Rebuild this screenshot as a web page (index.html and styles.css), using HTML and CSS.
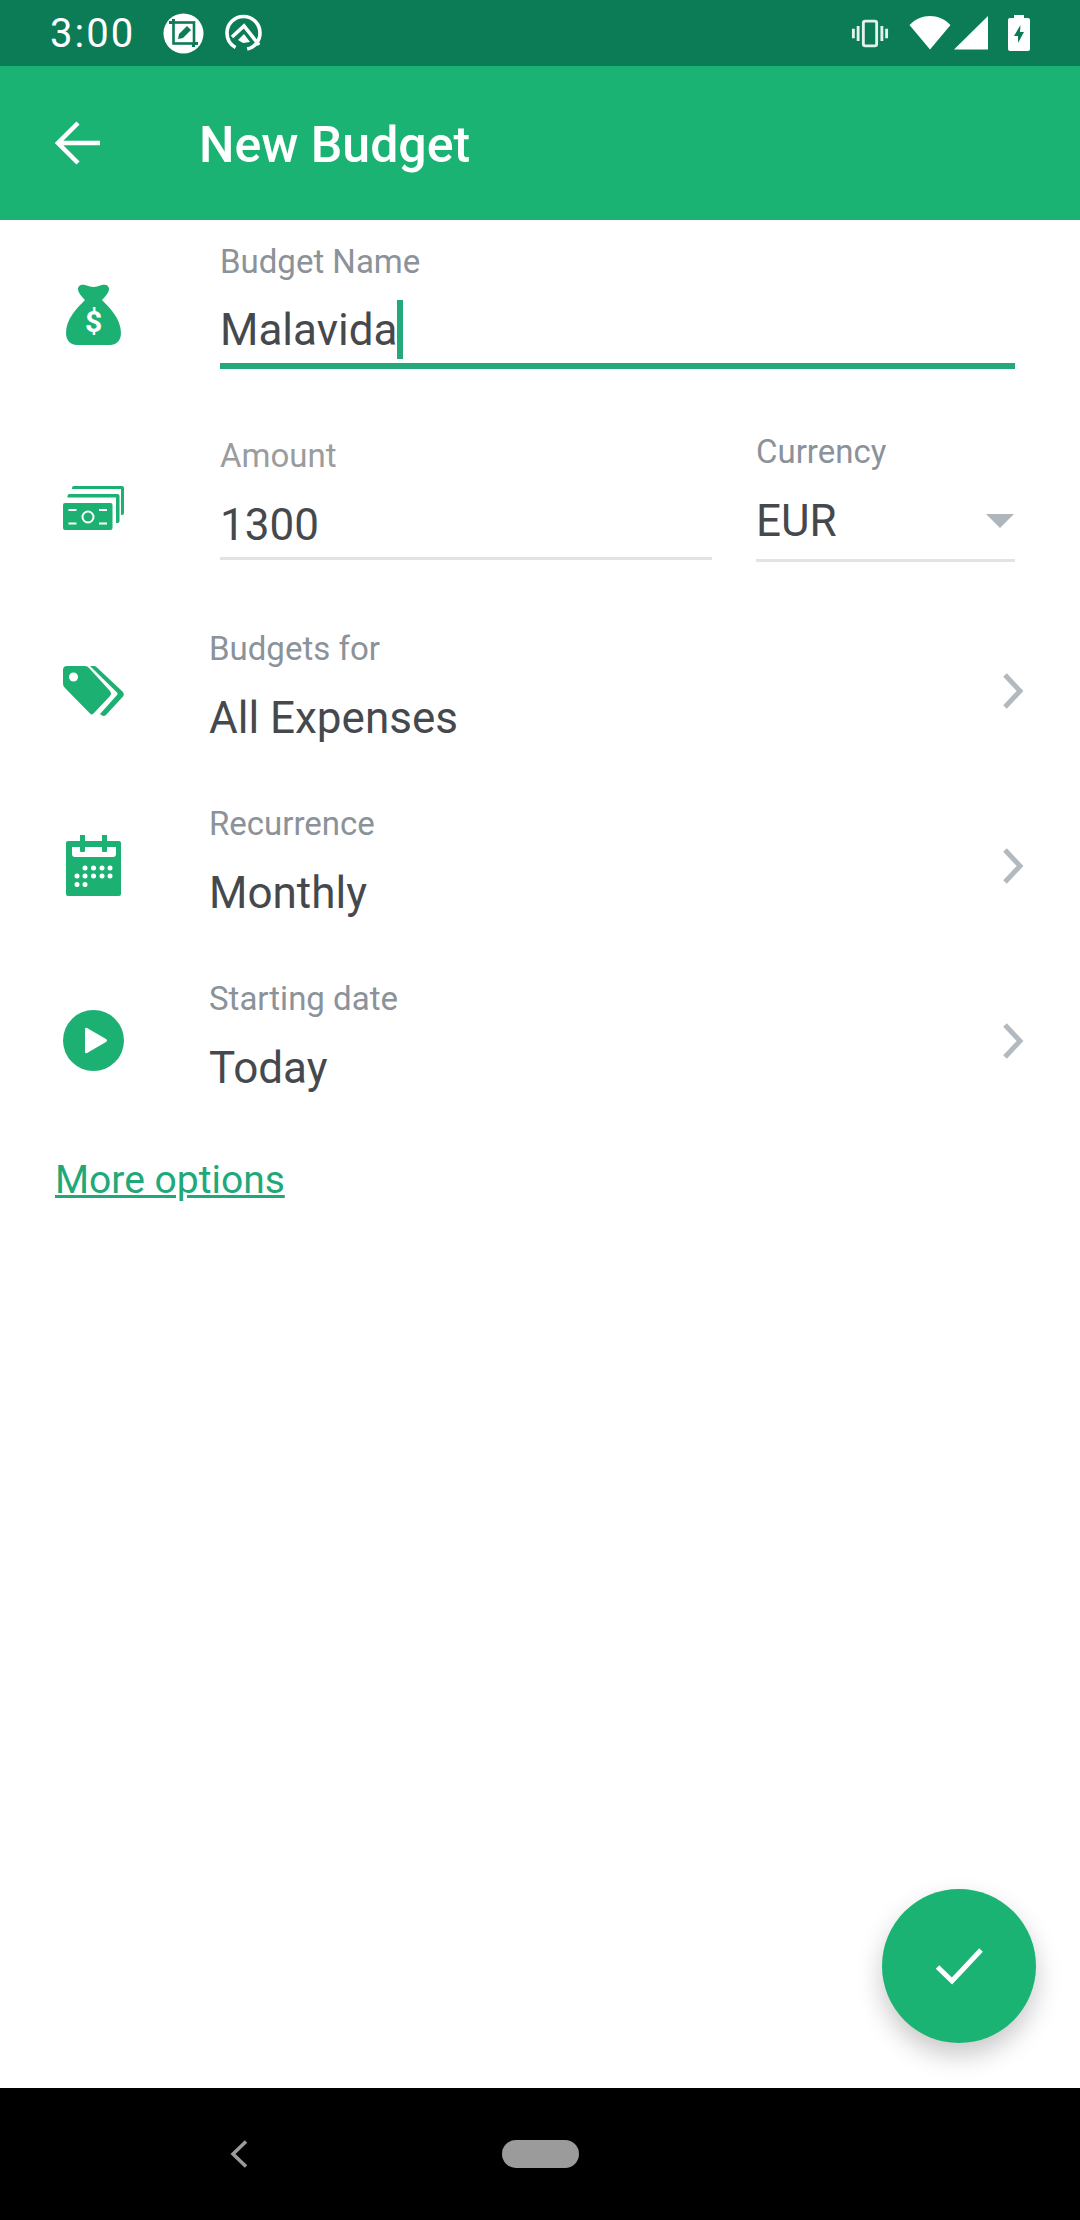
FILE: index.html
```html
<!DOCTYPE html>
<html lang="en">
<head>
<meta charset="utf-8">
<title>New Budget</title>
<link rel="stylesheet" href="styles.css">
</head>
<body>
<div class="screen">
  <header class="status">
    <span class="time">3:00</span>
    <svg class="st-crop" width="41" height="41" viewBox="0 0 41 41"><circle cx="20.500" cy="20.500" r="20" fill="#fff"/><rect x="10.500" y="9.500" width="20.500" height="21" fill="none" stroke="#0b7c56" stroke-width="2.600"/><path d="M9 6h3v4H9zM29 30h3v4h-3zM31 29h4v3h-4zM6 8h4v3H6z" fill="#0b7c56"/><path d="M15 26l1-5 8-8 4 4-8 8z" fill="#0b7c56"/></svg>
    <svg class="st-q" width="38" height="39" viewBox="0 0 38 39"><circle cx="18.500" cy="19" r="16.500" fill="none" stroke="#fff" stroke-width="3.600" stroke-dasharray="92 12" stroke-dashoffset="-34"/><path d="M7 23L19 12l15 19" fill="none" stroke="#fff" stroke-width="3.600"/><path d="M13 26l6-6 6 8-7 1z" fill="#fff"/></svg>
    <span class="status-gap"></span>
    <svg class="st-vib" width="38" height="29" viewBox="0 0 40 30"><path d="M1 10h3v10H1zM6 7h3v16H6zM31 7h3v16h-3zM36 10h3v10h-3z" fill="#e4f2ec"/><rect x="13" y="2" width="14" height="26" rx="2" fill="none" stroke="#e4f2ec" stroke-width="3"/></svg>
    <svg class="st-wifi" width="42" height="34" viewBox="0 0 42 34"><path d="M0.500 9C12-3 30-3 41.500 9L21 33.500z" fill="#fff"/></svg>
    <svg class="st-sig" width="34" height="34" viewBox="0 0 34 34"><path d="M0 33.500L34 0v33.500z" fill="#fff"/></svg>
    <svg class="st-bat" width="22" height="36" viewBox="0 0 22 36"><path d="M6 0h10v3h4q2 0 2 2v29q0 2-2 2H2q-2 0-2-2V5q0-2 2-2h4z" fill="#fff"/><path d="M12.500 10L6 21h4v7l6-11h-4z" fill="#0b7c56"/></svg>
  </header>

  <div class="appbar">
    <svg class="back" width="46" height="44" viewBox="0 0 46 44"><path d="M45 22H4M23 2L3 22l20 20" fill="none" stroke="#fff" stroke-width="4.500"/></svg>
    <h1 class="title">New Budget</h1>
  </div>

  <main class="content">
    <section class="row row-name">
      <svg class="ico ico-bag" width="55" height="61" viewBox="0 0 55 61"><path d="M12 5C12 1 16 0 19 1C23 2 25 3 27.500 3C30 3 32 2 36 1C39 0 43 1 43 5C43 8 40 12 36 16C44 24 55 35 55 49C55 57 50 61 44 61L11 61C5 61 0 57 0 49C0 35 11 24 19 16C15 12 12 8 12 5Z" fill="#1db073"/><text x="27.500" y="48" class="dollar">$</text></svg>
      <div class="field field-full">
        <div class="label">Budget Name</div>
        <div class="value value-name"><span class="caret-anchor">Malavida<span class="caret"></span></span></div>
      </div>
    </section>

    <section class="row row-amount">
      <svg class="ico ico-cash" width="61" height="44" viewBox="0 0 61 44"><path d="M11 0h48q2 0 2 2v25q0 2-2 2h-1V3H9V2q0-2 2-2z" fill="#1db073"/><path d="M6.500 8h48q2 0 2 2v25q0 2-2 2H53V11.500H4.500V10q0-2 2-2z" fill="#1db073"/><rect x="0" y="17" width="49.500" height="27" rx="2" fill="#1db073"/><circle cx="25" cy="31" r="5.500" fill="none" stroke="#fff" stroke-width="2"/><path d="M5.500 24h8M5.500 37.500h8M36 24h8M36 37.500h8" stroke="#fff" stroke-width="2"/></svg>
      <div class="field field-amount">
        <div class="label label-soft">Amount</div>
        <div class="value">1300</div>
      </div>
      <div class="field field-currency">
        <div class="label">Currency</div>
        <div class="value value-select">EUR<span class="tri"></span></div>
      </div>
    </section>

    <section class="row row-link">
      <svg class="ico ico-tag" width="61" height="50" viewBox="0 0 61 50"><path d="M4 0H22q2.500 0 4 2L47 25q2 3 0 5L31 47q-2 2.500-4 .500L2 22Q0 20 0 18V4Q0 0 4 0Z" fill="#1db073"/><circle cx="10.500" cy="11" r="4.500" fill="#fff"/><path d="M27 0h4q2 0 3.500 2L60 26q1.500 2.500 0 4.500L43 49q-2 1.500-4 .500l-2-1.500L54 29q1-1.500 0-2.500z" fill="#1db073"/></svg>
      <div class="link-text">
        <div class="label">Budgets for</div>
        <div class="link-value">All Expenses</div>
      </div>
      <svg class="chev" width="22" height="36" viewBox="0 0 22 36"><path d="M3 2l15 16L3 34" fill="none" stroke="#b3babf" stroke-width="5"/></svg>
    </section>

    <section class="row row-link">
      <svg class="ico ico-cal" width="55" height="61" viewBox="0 0 55 61"><path d="M14 0h5v6h17V0h5v6h12q2 0 2 2v51q0 2-2 2H2q-2 0-2-2V8q0-2 2-2h12z" fill="#1db073"/><path d="M6 12h8v4q0 1 1 1h3q1 0 1-1v-4h17v4q0 1 1 1h3q1 0 1-1v-4h9v7q0 3-3 3H9q-3 0-3-3z" fill="#fff"/><g fill="#fff"><circle cx="19" cy="33" r="2.500"/><circle cx="27.500" cy="33" r="2.500"/><circle cx="36" cy="33" r="2.500"/><circle cx="44" cy="33" r="2.500"/><circle cx="11" cy="41" r="2.500"/><circle cx="19" cy="41" r="2.500"/><circle cx="27.500" cy="41" r="2.500"/><circle cx="36" cy="41" r="2.500"/><circle cx="44" cy="41" r="2.500"/><circle cx="11" cy="49.500" r="2.500"/><circle cx="19" cy="49.500" r="2.500"/></g></svg>
      <div class="link-text">
        <div class="label">Recurrence</div>
        <div class="link-value">Monthly</div>
      </div>
      <svg class="chev" width="22" height="36" viewBox="0 0 22 36"><path d="M3 2l15 16L3 34" fill="none" stroke="#b3babf" stroke-width="5"/></svg>
    </section>

    <section class="row row-link">
      <svg class="ico ico-play" width="61" height="61" viewBox="0 0 61 61"><circle cx="30.500" cy="30.500" r="30.500" fill="#1db073"/><path d="M22 19q0-2 2-1l19 11q2 1.500 0 3L24 43q-2 1-2-1z" fill="#fff"/></svg>
      <div class="link-text">
        <div class="label">Starting date</div>
        <div class="link-value">Today</div>
      </div>
      <svg class="chev" width="22" height="36" viewBox="0 0 22 36"><path d="M3 2l15 16L3 34" fill="none" stroke="#b3babf" stroke-width="5"/></svg>
    </section>

    <a class="more">More options</a>

    <button class="fab" type="button" aria-label="Save">
      <svg width="48" height="38" viewBox="0 0 48 38"><path d="M2.500 20l14.500 14L46 3" fill="none" stroke="#fff" stroke-width="5"/></svg>
    </button>
  </main>

  <footer class="nav">
    <svg class="nav-back" width="18" height="28" viewBox="0 0 18 28"><path d="M16 1.500L3 14l13 12.500" fill="none" stroke="#9b9b9b" stroke-width="3.500"/></svg>
    <span class="nav-pill"></span>
  </footer>
</div>
</body>
</html>
```
FILE: styles.css
```css
* { box-sizing: border-box; }
html, body { margin: 0; padding: 0; background: #fff; }
body { font-family: Roboto, "Liberation Sans", sans-serif; }
.screen { width: 1080px; height: 2220px; display: flex; flex-direction: column; overflow: hidden; }

.status { height: 66px; flex: none; background: #0b7c56; display: flex; align-items: center; padding-left: 50px; padding-right: 50px; color: #fff; }
.time { font-size: 40px; line-height: 66px; width: 84px; letter-spacing: 2px; padding-top: 2px; }
.st-crop { margin-left: 29px; }
.st-q { margin-left: 21px; }
.status-gap { flex: 1; }
.st-wifi { margin-left: 20px; }
.st-sig { margin-left: 3px; }
.st-bat { margin-left: 20px; }

.appbar { height: 154px; flex: none; background: #1bb374; display: flex; align-items: center; padding-left: 55px; }
.back { flex: none; }
.title { margin: 4px 0 0 98px; color: #fff; font-size: 50px; font-weight: 500; line-height: 60px; }

.content { flex: 1; position: relative; display: flex; flex-direction: column; }
.row { display: flex; position: relative; }
.ico { flex: none; }
.label { font-size: 33px; line-height: 38px; color: #8b9299; }
.label-soft { color: #9a9c9e; }
.value { font-size: 44px; line-height: 50px; color: #45494d; }
.dollar { font-family: Roboto, sans-serif; font-weight: 700; font-size: 30px; fill: #fff; text-anchor: middle; }

.row-name { height: 149px; padding-left: 66px; }
.ico-bag { margin-top: 64px; }
.field-full { margin-left: 99px; width: 795px; height: 149px; padding-top: 23px; border-bottom: 6px solid #26a97a; }
.value-name { margin-top: 24px; }
.caret-anchor { position: relative; display: inline-block; }
.caret { position: absolute; right: -6px; top: -5px; width: 6px; height: 59px; background: #26a97a; }

.row-amount { height: 193px; padding-left: 63px; margin-bottom: 41px; }
.ico-cash { margin-top: 117px; }
.field-amount { margin-left: 96px; width: 492px; height: 191px; padding-top: 68px; border-bottom: 3px solid #e1e3e6; }
.field-amount .value { margin-top: 25px; }
.field-currency { margin-left: 44px; width: 259px; height: 193px; padding-top: 64px; border-bottom: 3px solid #e1e3e6; }
.field-currency .value { margin-top: 25px; }
.value-select { display: flex; justify-content: space-between; align-items: center; }
.tri { width: 0; height: 0; margin-right: 1px; border-left: 14px solid transparent; border-right: 14px solid transparent; border-top: 14px solid #aeb5bb; }

.row-link { height: 175px; padding-left: 63px; align-items: center; padding-right: 56px; }
.link-text { flex: 1; margin-left: 85px; padding-bottom: 8px; }
.link-value { font-size: 44px; line-height: 50px; color: #45494d; margin-top: 25px; }
.ico-cal { margin-left: 3px; margin-right: 3px; }

.more { margin-left: 55px; margin-top: 30px; font-size: 39px; line-height: 44px; color: #1fa878; text-decoration: underline; align-self: flex-start; }

.fab { position: absolute; right: 44px; bottom: 45px; width: 154px; height: 154px; border: 0; padding: 0; border-radius: 50%; background: #1bb374; display: flex; align-items: center; justify-content: center; box-shadow: 0 12px 26px rgba(0,0,0,.22); }

.nav { height: 132px; flex: none; background: #000; display: flex; align-items: center; padding-left: 230px; }
.nav-pill { width: 77px; height: 28px; border-radius: 14px; background: #9b9b9b; margin-left: 254px; }
```
